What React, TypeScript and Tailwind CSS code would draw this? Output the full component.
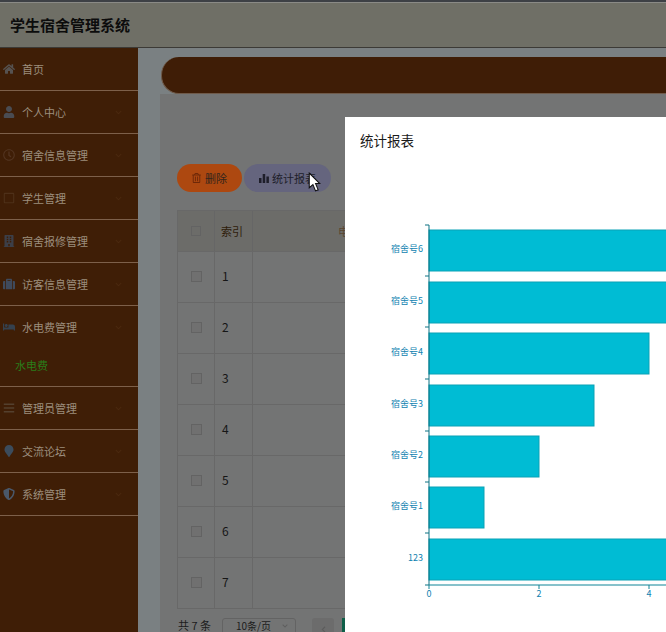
import React from 'react';
import { FaHome, FaUser, FaRegClock, FaRegSquare, FaBuilding, FaSuitcase, FaBed, FaBars, FaMapMarker, FaRegTrashAlt, FaChevronDown, FaChevronLeft, FaShieldAlt } from 'react-icons/fa';

const font = { fontFamily: '"Noto Sans CJK SC", "Liberation Sans", sans-serif' };

const menu = [
    { icon: FaHome, label: '首页', tone: 'text-[#565250]' },
    { icon: FaUser, label: '个人中心', tone: 'text-[#4a4c52]', arrow: true },
    { icon: FaRegClock, label: '宿舍信息管理', tone: 'text-[#523420]', arrow: true },
    { icon: FaRegSquare, label: '学生管理', tone: 'text-[#4e3019]', arrow: true },
    { icon: FaBuilding, label: '宿舍报修管理', tone: 'text-[#3c3f48]', arrow: true },
    { icon: FaSuitcase, label: '访客信息管理', tone: 'text-[#3f4a5c]', arrow: true },
    { icon: FaBed, label: '水电费管理', tone: 'text-[#35414e]', arrow: true, sub: '水电费' },
    { icon: FaBars, label: '管理员管理', tone: 'text-[#54402e]', arrow: true },
    { icon: FaMapMarker, label: '交流论坛', tone: 'text-[#3c4c5c]', arrow: true },
    { icon: FaShieldAlt, label: '系统管理', tone: 'text-[#4a586a]', arrow: true },
];

const bars = [
    { label: '宿舍号6', y: 230, w: 240 },
    { label: '宿舍号5', y: 282, w: 240 },
    { label: '宿舍号4', y: 333, w: 220 },
    { label: '宿舍号3', y: 385, w: 165 },
    { label: '宿舍号2', y: 436, w: 110 },
    { label: '宿舍号1', y: 487, w: 55 },
    { label: '123', y: 539, w: 240 },
];

const ticks = [225, 276, 327, 379, 431, 482, 533, 585];

const Sidebar = () => (
    <aside className="w-[138px] shrink-0 bg-[#3f1e06] flex flex-col text-[11px] text-[#9c8e7e]">
        {menu.map((item) => (
            <div key={item.label} className="border-b border-[#7d604a]">
                <div className="h-[42px] flex items-center pl-[3px] pr-[16px]">
                    <item.icon className={`w-[12px] h-[12px] shrink-0 ${item.tone}`} />
                    <span className="ml-[7px] flex-1">{item.label}</span>
                    {item.arrow && <FaChevronDown className="w-[7px] h-[7px] text-[#4a280f]" />}
                </div>
                {item.sub && <div className="h-[38px] pl-[15px] pt-[9px] text-[#2a7d1a]">{item.sub}</div>}
            </div>
        ))}
    </aside>
);

const Row = ({ n }: { n: number }) => (
    <div className="h-[51px] flex border-b border-[#686868]">
        <div className="w-[37px] border-r border-[#686868] flex items-center justify-center pb-[2px]">
            <span className="w-[11px] h-[11px] border border-[#636363] bg-[#707070]" />
        </div>
        <div className="w-[38px] border-r border-[#686868] pl-[7px] pb-[2px] flex items-center text-[12px] text-[#161616]">{n}</div>
        <div className="flex-1" />
    </div>
);

const Main = () => (
    <main className="flex-1 bg-[#7a8082] pt-[9px] min-w-0 flex flex-col">
        <div className="ml-[23px] h-[37px] w-[600px] shrink-0 bg-[#3f1d06] rounded-l-[18px] border-l border-b border-[#6f5a4a]" />
        <div className="flex-1 ml-[22px] bg-[#737474]">
            <div className="mt-[70px] ml-[17px] flex gap-[2px] h-[28px]">
                <button className="w-[65px] rounded-[14px] bg-[#ad4810] flex items-center justify-center gap-[4px] text-[11px] text-[#33251c]">
                    <FaRegTrashAlt className="w-[9px] h-[10px] text-[#6e2808]" />
                    删除
                </button>
                <button className="w-[87px] rounded-[14px] bg-[#65657e] flex items-center justify-center gap-[3px] text-[11px] text-[#1e1e2a]">
                    <svg width="10" height="9" viewBox="0 0 10 9" fill="#1e1e2a">
                        <rect x="0" y="4" width="2.5" height="5" />
                        <rect x="3.7" y="0" width="2.5" height="9" />
                        <rect x="7.4" y="2.5" width="2.5" height="6.5" />
                    </svg>
                    统计报表
                </button>
            </div>
            <div className="mt-[18px] ml-[17px] w-[500px] border-l border-t border-[#686868]">
                <div className="h-[41px] flex bg-[#6c6c69] border-b border-[#686868]">
                    <div className="w-[37px] border-r border-[#666666] flex items-center justify-center">
                        <span className="w-[10px] h-[10px] border border-[#636363] bg-[#6c6c69]" />
                    </div>
                    <div className="w-[38px] border-r border-[#666666] pl-[6px] flex items-center text-[11px] text-[#2e1c0a]">索引</div>
                    <div className="flex-1 pl-[85px] flex items-center text-[11px] text-[#5a4630]">电</div>
                </div>
                {[1, 2, 3, 4, 5, 6, 7].map((n) => <Row key={n} n={n} />)}
            </div>
            <div className="mt-[9px] ml-[18px] flex items-start text-[11px] text-[#1c1c1c]">
                <span className="w-[44px] mt-[2px] leading-[11px]">共 7 条</span>
                <span className="w-[74px] h-[22px] border border-[#636363] rounded-[3px] flex justify-between pl-[13px] pr-[7px] pt-[1px] text-[10px] leading-[11px]">
                    10条/页
                    <FaChevronDown className="w-[6px] h-[6px] mt-[3px] text-[#5e5e5e]" />
                </span>
                <span className="ml-[16px] w-[22px] h-[22px] bg-[#6c6c6c] rounded-[3px] flex items-center justify-center">
                    <FaChevronLeft className="w-[7px] h-[7px] text-[#5c5c5c]" />
                </span>
                <span className="ml-[8px] w-[4px] h-[22px] bg-[#0f5f48]" />
            </div>
        </div>
    </main>
);

const Chart = () => (
    <svg className="absolute left-[-345px] top-[-117px]" width="666" height="632" style={font}>
        {bars.map((b) => (
            <g key={b.label}>
                <rect x="429" y={b.y} width={b.w} height="41" fill="#00bcd4" stroke="#0aa2b6" strokeWidth="1" />
                <text x="423" y={b.y + 22} textAnchor="end" fontSize="9" fill="#0f82b0">{b.label}</text>
            </g>
        ))}
        <line x1="429" y1="225" x2="429" y2="585" stroke="#0e7283" />
        <line x1="429" y1="585" x2="666" y2="585" stroke="#0e8497" />
        {ticks.map((t) => <line key={t} x1="425" y1={t} x2="429" y2={t} stroke="#0e7283" />)}
        {[429, 539, 649].map((x, i) => (
            <g key={x}>
                <line x1={x} y1="585" x2={x} y2="589" stroke="#0e8497" />
                <text x={x} y="597" textAnchor="middle" fontSize="9" fill="#0f82b0">{i * 2}</text>
            </g>
        ))}
    </svg>
);

export default function App() {
    return (
        <div className="relative w-[666px] h-[632px] overflow-hidden flex flex-col bg-[#767878]" style={font}>
            <div className="h-[3px] shrink-0 bg-[#3d4045] border-b border-[#8a8a86]" />
            <header className="h-[45px] shrink-0 bg-[#6f6f66] border-b border-[#3c3a36] flex items-center pl-[10px] text-[15px] font-bold text-[#0c0c0c]">
                学生宿舍管理系统
            </header>
            <div className="flex-1 flex min-h-0">
                <Sidebar />
                <Main />
            </div>

            <div className="absolute left-[345px] top-[117px] w-[321px] h-[515px] bg-white">
                <h2 className="pl-[15px] pt-[13px] text-[13.5px] leading-[20px] text-[#1a1a1a]">统计报表</h2>
                <Chart />
            </div>

            <svg className="absolute left-[308px] top-[172px]" width="13" height="21" viewBox="0 0 12 20">
                <path d="M1 1 L1 15 L4.5 12 L7 18 L9.5 17 L7 11 L11 11 Z" fill="#ffffff" stroke="#111111" strokeWidth="1" />
            </svg>
        </div>
    );
}
